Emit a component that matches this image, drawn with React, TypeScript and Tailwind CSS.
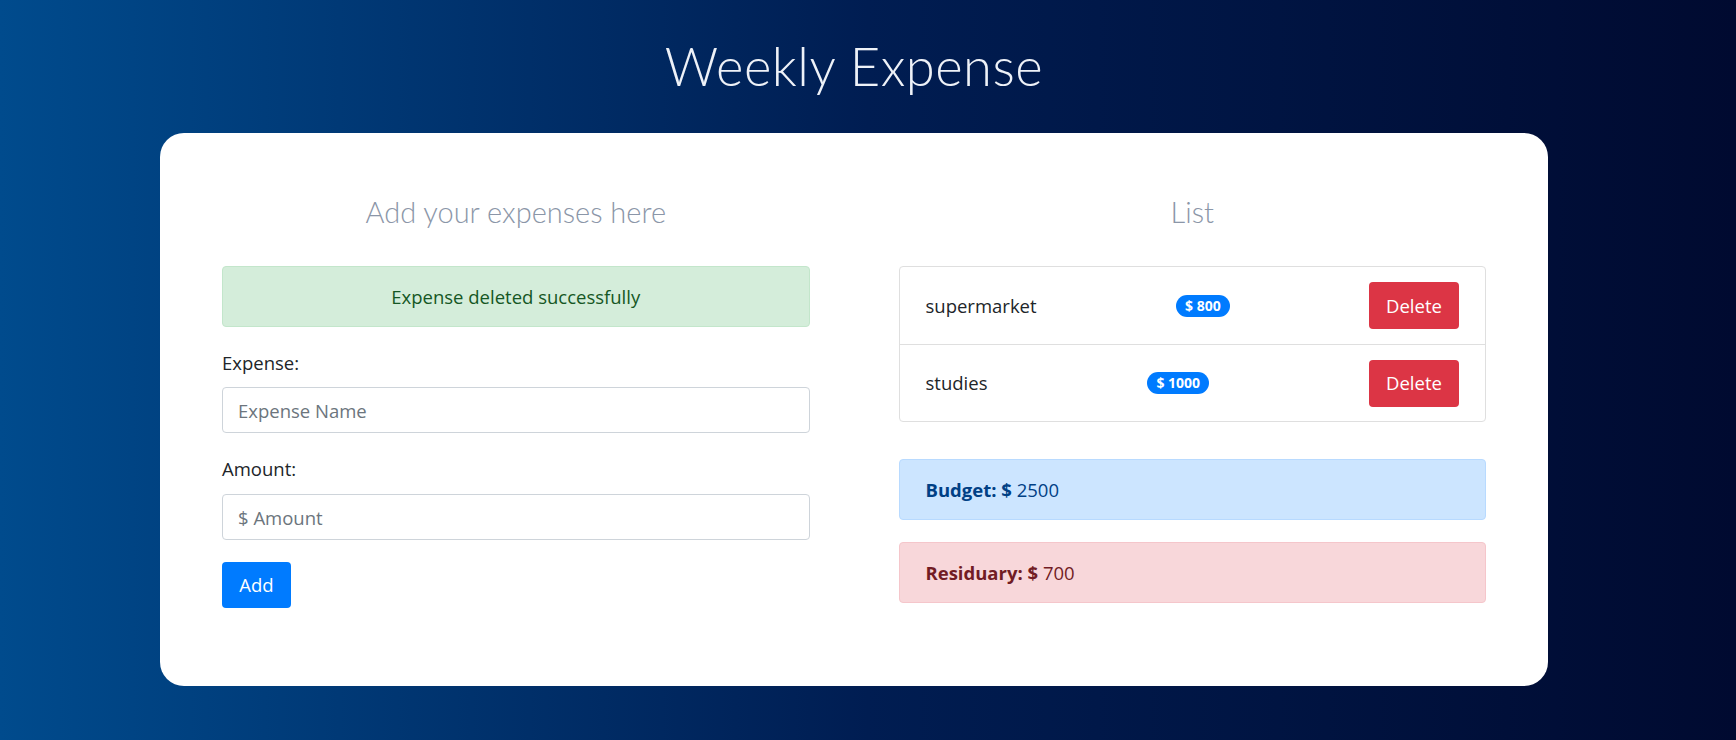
import React from 'react';

const body = { fontFamily: '"Open Sans", "Noto Sans", sans-serif' };
const thin = { fontFamily: 'Lato, "Open Sans", sans-serif' };

const expenses = [
  { name: 'supermarket', amount: 800 },
  { name: 'studies', amount: 1000 },
];

export default function App() {
  return (
    <div className="min-h-screen w-full bg-[linear-gradient(to_right,#004b8d,#001d52_50%,#000a30)] pt-[36px] pb-[54px]" style={body}>
      <h1 className="ml-[160px] w-[1388px] text-center text-[52.5px] leading-[60px] font-light text-[#eef2f8] tracking-[0.5px]" style={thin}>
        Weekly Expense
      </h1>

      <div className="ml-[160px] mt-[37px] w-[1388px] rounded-[24px] bg-white px-[62px] pt-[63px] pb-[78px] grid grid-cols-2 gap-x-[89px]">
        {/* left column: form */}
        <div className="flex flex-col">
          <h2 className="text-center text-[29px] leading-[32px] font-light text-[#8b96a8]" style={thin}>
            Add your expenses here
          </h2>
          <div className="mt-[38px] h-[61px] flex items-center justify-center rounded-[4px] border border-[#c3e6cb] bg-[#d4edda] text-[18.5px] text-[#155724]">
            Expense deleted successfully
          </div>

          <label className="mt-[23px] text-[18.5px] leading-[26px] text-[#212529]">Expense:</label>
          <input
            className="mt-[11px] h-[46px] w-full rounded-[4px] border border-[#ced4da] px-[15px] text-[18.5px] text-[#495057] placeholder:text-[#6c757d] outline-none"
            placeholder="Expense Name"
          />

          <label className="mt-[23px] text-[18.5px] leading-[26px] text-[#212529]">Amount:</label>
          <input
            className="mt-[12px] h-[46px] w-full rounded-[4px] border border-[#ced4da] px-[15px] text-[18.5px] text-[#495057] placeholder:text-[#6c757d] outline-none"
            placeholder="$ Amount"
          />

          <div className="mt-[22px]">
            <button className="h-[46px] w-[69px] rounded-[4px] bg-[#007bff] text-[18.5px] text-white">Add</button>
          </div>
        </div>

        {/* right column: list */}
        <div className="flex flex-col">
          <h2 className="text-center text-[29px] leading-[32px] font-light text-[#8b96a8]" style={thin}>
            List
          </h2>
          <ul className="mt-[38px] rounded-[4px] border border-[#dfdfdf]">
            {expenses.map((e, i) => (
              <li
                key={e.name}
                className={`flex h-[77px] items-center justify-between px-[26px] ${i > 0 ? 'border-t border-[#dfdfdf]' : ''}`}
              >
                <span className="text-[18.5px] text-[#212529]">{e.name}</span>
                <span className="rounded-full bg-[#007bff] px-[9px] text-[14px] leading-[22px] font-bold text-white">$ {e.amount}</span>
                <button className="h-[47px] w-[90px] rounded-[4px] bg-[#dc3545] text-[18.5px] text-white">Delete</button>
              </li>
            ))}
          </ul>

          <div className="mt-[37px] h-[61px] flex items-center rounded-[4px] border border-[#b8daff] bg-[#cce5ff] px-[26px] text-[18.5px] text-[#004085]">
            <span className="font-bold">Budget: $</span>&nbsp;2500
          </div>
          <div className="mt-[22px] h-[61px] flex items-center rounded-[4px] border border-[#f5c6cb] bg-[#f8d7da] px-[26px] text-[18.5px] text-[#721c24]">
            <span className="font-bold">Residuary: $</span>&nbsp;700
          </div>
        </div>
      </div>
    </div>
  );
}
